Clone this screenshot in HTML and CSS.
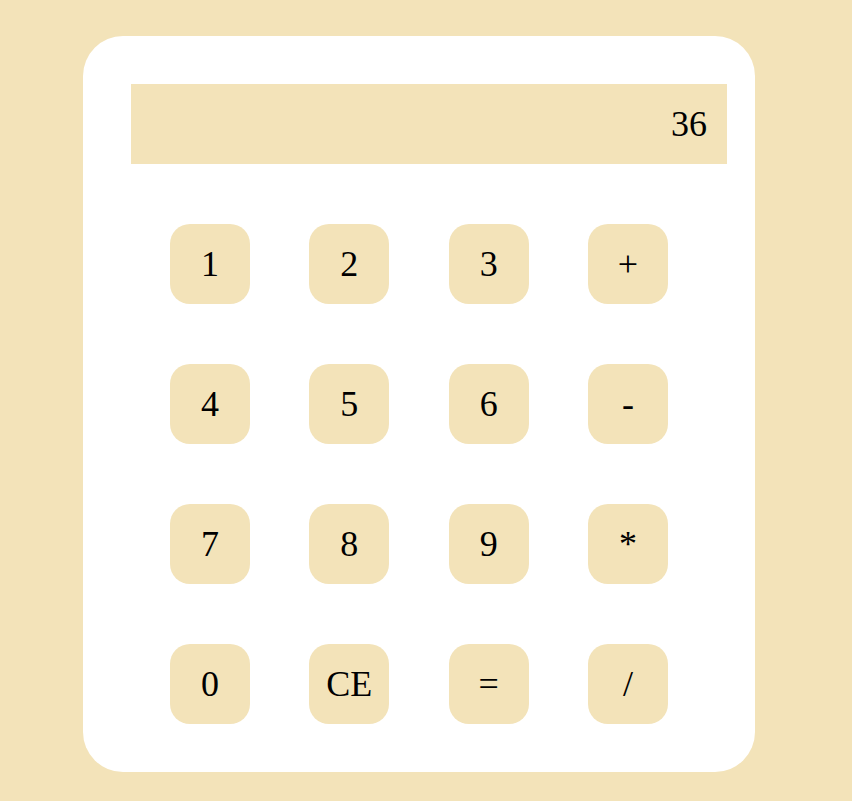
FILE: index.html
```html
<!DOCTYPE html>
<html>
<head>
<meta charset="utf-8">
<link rel="stylesheet" href="styles.css">
</head>
<body>
<div class="calc">
  <div class="display">36</div>
  <div class="keys">
    <button class="key">1</button>
    <button class="key">2</button>
    <button class="key">3</button>
    <button class="key">+</button>
    <button class="key">4</button>
    <button class="key">5</button>
    <button class="key">6</button>
    <button class="key">-</button>
    <button class="key">7</button>
    <button class="key">8</button>
    <button class="key">9</button>
    <button class="key">*</button>
    <button class="key">0</button>
    <button class="key">CE</button>
    <button class="key">=</button>
    <button class="key">/</button>
  </div>
</div>
</body>
</html>
```
FILE: styles.css
```css
html, body {
  margin: 0;
  padding: 0;
}
body {
  background: #f3e3b9;
  font-family: "Liberation Serif", "Times New Roman", serif;
  height: 801px;
  padding-top: 36px;
  box-sizing: border-box;
}
.calc {
  width: 672px;
  height: 736px;
  margin-left: 83px;
  background: #ffffff;
  border-radius: 40px;
  padding: 48px;
  box-sizing: border-box;
}
.display {
  width: 596px;
  height: 80px;
  background: #f3e3b9;
  font-size: 36px;
  line-height: 80px;
  text-align: right;
  padding-right: 20px;
  box-sizing: border-box;
  color: #000;
}
.keys {
  margin-top: 60px;
  width: 576px;
  display: grid;
  grid-template-columns: repeat(4, 80px);
  column-gap: 59.33px;
  row-gap: 60px;
  justify-content: center;
}
.key {
  width: 80px;
  height: 80px;
  border: none;
  border-radius: 20px;
  background: #f3e3b9;
  font-family: "Liberation Serif", "Times New Roman", serif;
  font-size: 36px;
  color: #000;
  padding: 0;
  display: flex;
  align-items: center;
  justify-content: center;
}
```
